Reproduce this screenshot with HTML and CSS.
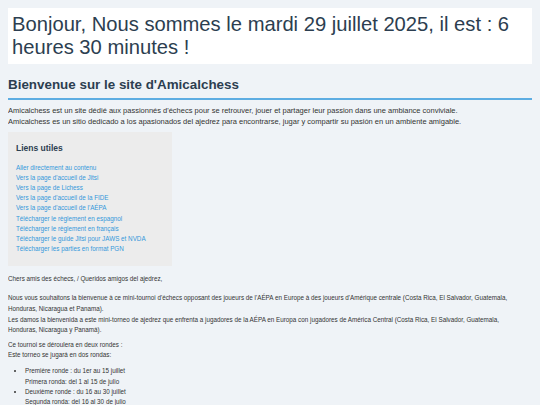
FILE: index.html
```html
<!DOCTYPE html>
<html lang="fr">
<head>
<meta charset="utf-8">
<title>Amicalchess</title>
<link rel="stylesheet" href="styles.css">
</head>
<body>
<div class="greeting">Bonjour, Nous sommes le mardi 29 juillet 2025, il est : 6 heures 30 minutes !</div>
<h1 class="title">Bienvenue sur le site d'Amicalchess</h1>
<p class="intro">Amicalchess est un site dédié aux passionnés d'échecs pour se retrouver, jouer et partager leur passion dans une ambiance conviviale.<br>Amicalchess es un sitio dedicado a los apasionados del ajedrez para encontrarse, jugar y compartir su pasión en un ambiente amigable.</p>
<nav class="links">
  <h2 class="links-title">Liens utiles</h2>
  <ul class="links-list">
    <li><a href="#contenu">Aller directement au contenu</a></li>
    <li><a href="#">Vers la page d'accueil de Jitsi</a></li>
    <li><a href="#">Vers la page de Lichess</a></li>
    <li><a href="#">Vers la page d'accueil de la FIDE</a></li>
    <li><a href="#">Vers la page d'accueil de l'AÉPA</a></li>
    <li><a href="#">Télécharger le règlement en espagnol</a></li>
    <li><a href="#">Télécharger le règlement en français</a></li>
    <li><a href="#">Télécharger le guide Jitsi pour JAWS et NVDA</a></li>
    <li><a href="#">Télécharger les parties en format PGN</a></li>
  </ul>
</nav>
<main id="contenu" class="content">
  <p class="p-greet">Chers amis des échecs, / Queridos amigos del ajedrez,</p>
  <p class="p-welcome">Nous vous souhaitons la bienvenue à ce mini-tournoi d'échecs opposant des joueurs de l'AÉPA en Europe à des joueurs d'Amérique centrale (Costa Rica, El Salvador, Guatemala, Honduras, Nicaragua et Panama).<br>Les damos la bienvenida a este mini-torneo de ajedrez que enfrenta a jugadores de la AÉPA en Europa con jugadores de América Central (Costa Rica, El Salvador, Guatemala, Honduras, Nicaragua y Panamá).</p>
  <p class="p-rounds">Ce tournoi se déroulera en deux rondes :<br>Este torneo se jugará en dos rondas:</p>
  <ul class="rounds">
    <li>Première ronde : du 1er au 15 juillet<br>Primera ronda: del 1 al 15 de julio</li>
    <li>Deuxième ronde : du 16 au 30 juillet<br>Segunda ronda: del 16 al 30 de julio</li>
  </ul>
</main>
</body>
</html>
```
FILE: styles.css
```css
html, body {
  background: #eff3f7;
}
body {
  margin: 8px;
  font-family: "Liberation Sans", Arial, sans-serif;
  color: #333333;
}
.greeting {
  background: #ffffff;
  color: #2c3e50;
  font-size: 20.2px;
  line-height: 23.3px;
  padding: 4.5px 4px 4.5px;
}
.title {
  margin: 12px 0 0;
  font-size: 13.4px;
  line-height: 18px;
  color: #2c3e50;
  font-weight: bold;
  padding-bottom: 4px;
  border-bottom: 2px solid #5dade2;
}
.intro {
  margin: 5px 0 0;
  font-size: 7.5px;
  line-height: 11px;
}
.links {
  width: 148px;
  margin-top: 5.5px;
  background: #ececec;
  padding: 10px 8px 12px;
}
.links-title {
  margin: 0 0 9px;
  font-size: 8.5px;
  line-height: 12px;
  color: #2c3e50;
}
.links-list {
  list-style: none;
  margin: 0;
  padding: 0;
  font-size: 6.3px;
  line-height: 10.1px;
}
.links-list a {
  color: #3498db;
  text-decoration: none;
}
.content {
  font-size: 6.3px;
  line-height: 10.6px;
  padding-right: 12px;
}
.content p {
  margin: 0;
}
.p-greet {
  padding-top: 8px;
}
.content .p-welcome {
  margin-top: 8.8px;
}
.content .p-rounds {
  margin-top: 4px;
}
.rounds {
  margin: 5.5px 0 0;
  padding-left: 17px;
  line-height: 10.3px;
}
```
